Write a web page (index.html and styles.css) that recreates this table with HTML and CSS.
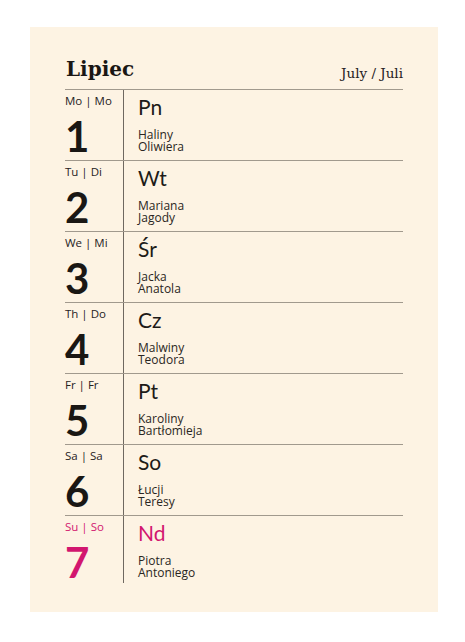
FILE: index.html
```html
<!DOCTYPE html>
<html lang="pl">
<head>
<meta charset="utf-8">
<title>Lipiec</title>
<link rel="stylesheet" href="styles.css">
</head>
<body>
<div class="page">
  <div class="card">
    <div class="head">
      <h1 class="month">Lipiec</h1>
      <div class="month-alt">July / Juli</div>
    </div>
    <div class="days">
      <div class="row">
        <div class="left"><div class="label">Mo | Mo</div><div class="num">1</div></div>
        <div class="right"><div class="abbr">Pn</div><div class="names">Haliny<br>Oliwiera</div></div>
      </div>
      <div class="row">
        <div class="left"><div class="label">Tu | Di</div><div class="num">2</div></div>
        <div class="right"><div class="abbr">Wt</div><div class="names">Mariana<br>Jagody</div></div>
      </div>
      <div class="row">
        <div class="left"><div class="label">We | Mi</div><div class="num">3</div></div>
        <div class="right"><div class="abbr">Śr</div><div class="names">Jacka<br>Anatola</div></div>
      </div>
      <div class="row">
        <div class="left"><div class="label">Th | Do</div><div class="num">4</div></div>
        <div class="right"><div class="abbr">Cz</div><div class="names">Malwiny<br>Teodora</div></div>
      </div>
      <div class="row">
        <div class="left"><div class="label">Fr | Fr</div><div class="num">5</div></div>
        <div class="right"><div class="abbr">Pt</div><div class="names">Karoliny<br>Bartłomieja</div></div>
      </div>
      <div class="row">
        <div class="left"><div class="label">Sa | Sa</div><div class="num">6</div></div>
        <div class="right"><div class="abbr">So</div><div class="names">Łucji<br>Teresy</div></div>
      </div>
      <div class="row row-last sunday">
        <div class="left"><div class="label">Su | So</div><div class="num">7</div></div>
        <div class="right"><div class="abbr">Nd</div><div class="names">Piotra<br>Antoniego</div></div>
      </div>
    </div>
  </div>
</div>
</body>
</html>
```

FILE: styles.css
```css
html, body {
  margin: 0;
  padding: 0;
  background: #ffffff;
}

.page {
  width: 465px;
  height: 642px;
  padding: 27px 27px 30px 30px;
  box-sizing: border-box;
}

.card {
  width: 408px;
  height: 585px;
  box-sizing: border-box;
  background: #fdf3e3;
  padding: 0 35px 37px 35px;
  color: #1e1b18;
}

.head {
  height: 62px;
  box-sizing: border-box;
  padding-bottom: 8px;
  display: flex;
  justify-content: space-between;
  align-items: flex-end;
}

.month {
  margin: 0 0 1px 1px;
  font-family: "DejaVu Serif", serif;
  font-weight: bold;
  font-size: 20px;
  line-height: 22px;
  color: #1a1714;
}

.month-alt {
  font-family: "DejaVu Serif", serif;
  font-size: 13.5px;
  line-height: 16px;
  color: #26221e;
}

.row {
  display: grid;
  grid-template-columns: 59px 1fr;
  height: 71px;
  box-sizing: border-box;
  border-top: 1px solid #a1998d;
}

.row-last {
  height: 60px;
}

.left {
  border-right: 1px solid #6f6860;
  padding-top: 4px;
}

.label {
  font-family: "Open Sans", "Noto Sans", sans-serif;
  font-size: 11.5px;
  line-height: 13px;
  color: #26221e;
}

.num {
  margin-top: 8px;
  font-family: Lato, sans-serif;
  font-weight: 700;
  font-size: 42px;
  line-height: 42px;
  color: #1a1714;
}

.right {
  padding-left: 14px;
  padding-top: 5px;
}

.abbr {
  font-family: Lato, sans-serif;
  font-size: 21px;
  line-height: 24px;
  color: #1e1b18;
}

.names {
  margin-top: 10px;
  font-family: "Open Sans", sans-serif;
  font-size: 12px;
  line-height: 12px;
  color: #2a2622;
}

.sunday .label,
.sunday .num,
.sunday .abbr {
  color: #d2166f;
}
```
